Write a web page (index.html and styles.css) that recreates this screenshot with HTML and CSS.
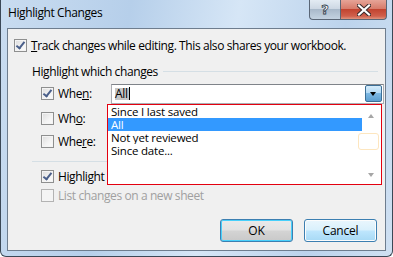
FILE: index.html
```html
<!DOCTYPE html>
<html lang="en">
<head>
  <meta charset="UTF-8" />
  <title>Highlight Changes</title>
  <link rel="stylesheet" href="styles.css">
</head>
<body>
  <div class="window">
    <div class="titlebar">
      <span class="title">Highlight Changes</span>
      <div class="caption">
        <span class="cap-btn help">?</span>
        <span class="cap-btn close">
          <svg width="14" height="12" viewBox="0 0 14 12">
            <path d="M2 1.5 L12 10.5 M12 1.5 L2 10.5" stroke="#3a2a2a" stroke-width="4.2" stroke-linecap="square"/>
            <path d="M2 1.5 L12 10.5 M12 1.5 L2 10.5" stroke="#ffffff" stroke-width="2.2" stroke-linecap="square"/>
          </svg>
        </span>
      </div>
    </div>

    <div class="client">
      <div class="row track">
        <span class="cb checked"></span>
        <span class="lbl"><u>T</u>rack changes while editing. This also shares your workbook.</span>
      </div>

      <div class="group-head">
        <span>Highlight which changes</span>
        <span class="rule"></span>
      </div>

      <div class="row opt when">
        <span class="cb checked"></span>
        <span class="lbl opt-lbl">Whe<u>n</u>:</span>
        <div class="combo">
          <span class="combo-text"><span class="sel">All</span><span class="caret"></span></span>
          <span class="combo-btn"></span>
        </div>
      </div>
      <div class="row opt who">
        <span class="cb"></span>
        <span class="lbl opt-lbl">Wh<u>o</u>:</span>
      </div>
      <div class="row opt">
        <span class="cb"></span>
        <span class="lbl opt-lbl">Whe<u>r</u>e:</span>
      </div>

      <div class="sep"></div>

      <div class="row opt screen">
        <span class="cb checked"></span>
        <span class="lbl">Highlight changes on <u>s</u>creen</span>
      </div>
      <div class="row opt list disabled">
        <span class="cb"></span>
        <span class="lbl">List changes on a new sheet</span>
      </div>

      <div class="buttons">
        <button class="btn default">OK</button>
        <button class="btn hover">Cancel</button>
      </div>

      <div class="dropdown">
        <div class="items">
          <div class="item">Since I last saved</div>
          <div class="item active">All</div>
          <div class="item">Not yet reviewed</div>
          <div class="item">Since date...</div>
        </div>
        <div class="scroll">
          <span class="arrow up"></span>
          <span class="thumb-glow"></span>
          <span class="arrow down"></span>
        </div>
      </div>
    </div>
  </div>
</body>
</html>
```

FILE: styles.css
```css
body {
  margin: 0;
  background: #ffffff;
  font-family: "Open Sans", "Noto Sans", sans-serif;
  font-size: 12px;
  color: #000;
}
.window {
  width: 393px;
  height: 257px;
  box-sizing: border-box;
  padding: 0 6px 5px 6px;
  border: 1px solid #3b4856;
  border-top: none;
  border-radius: 0 0 6px 6px;
  background: linear-gradient(100deg, #c9dcf0 0%, #b6cfea 30%, #d6e6f6 55%, #bcd3ec 80%, #cfe0f2 100%);
  position: relative;
}
.titlebar {
  height: 28px;
  display: flex;
  align-items: flex-start;
}
.title {
  margin-top: 5px;
  margin-left: 1px;
  line-height: 16px;
  letter-spacing: -0.4px;
}
.caption {
  margin-left: auto;
  margin-right: -1px;
  display: flex;
}
.cap-btn {
  height: 20px;
  box-sizing: border-box;
  display: flex;
  align-items: center;
  justify-content: center;
  border: 1px solid #5a6676;
  border-top: none;
}
.help {
  width: 31px;
  border-right: none;
  border-radius: 0 0 0 4px;
  background: linear-gradient(#e3ebf3 0%, #cdd8e4 45%, #a9b9ca 50%, #c3d2e1 100%);
  color: #fff;
  font-family: "DejaVu Sans", sans-serif;
  font-weight: bold;
  font-size: 13px;
  -webkit-text-stroke: 0.8px #2d3b4a;
}
.close {
  width: 47px;
  border-radius: 0 0 4px 0;
  background: linear-gradient(#e6a497 0%, #d77c6b 45%, #c24430 50%, #d0604c 85%, #e0957f 100%);
}
.client {
  position: relative;
  height: 223px;
  box-sizing: border-box;
  border: 1px solid #6e7d8e;
  background: #f0f0f0;
  padding-top: 8px;
}
.row {
  display: flex;
  align-items: center;
}
.track {
  height: 17px;
  padding-left: 6px;
}
.cb {
  width: 13px;
  height: 13px;
  box-sizing: border-box;
  border: 1px solid #8e8f8f;
  background: linear-gradient(135deg, #dcdcdc, #f4f4f4 60%, #fbfbfb);
  box-shadow: inset 0 0 0 1px #f4f4f4;
  flex: none;
  position: relative;
}
.cb.checked::after {
  content: "";
  position: absolute;
  left: 3px;
  top: 0px;
  width: 3px;
  height: 7px;
  border: solid #4a5f8a;
  border-width: 0 2px 2px 0;
  transform: rotate(38deg);
}
.lbl {
  margin-left: 4px;
  letter-spacing: -0.4px;
  line-height: 15px;
  white-space: nowrap;
}
.group-head {
  margin-top: 9px;
  height: 16px;
  padding-left: 24px;
  display: flex;
  align-items: center;
  letter-spacing: -0.4px;
}
.rule {
  flex: 1;
  height: 1px;
  background: #d5dfe5;
  margin-left: 5px;
  margin-right: 7px;
}
.opt {
  padding-left: 33px;
  height: 23px;
}
.when {
  margin-top: 3px;
}
.who {
  margin-top: 2px;
}
.opt-lbl {
  width: 45px;
}
.combo {
  width: 273px;
  height: 20px;
  box-sizing: border-box;
  margin-left: 8px;
  border: 1px solid #abadb3;
  border-top-color: #7f8389;
  background: #fff;
  display: flex;
  align-items: center;
}
.combo-text {
  flex: 1;
  display: flex;
  align-items: center;
  padding-left: 3px;
  letter-spacing: -0.3px;
}
.sel {
  background: #c7c7c7;
  line-height: 12px;
  padding: 0 1px 0 0;
}
.caret {
  width: 1px;
  height: 13px;
  background: #000;
}
.combo-btn {
  width: 17px;
  height: 17px;
  margin-right: 1px;
  box-sizing: border-box;
  border: 1px solid #3c6f96;
  border-radius: 2px;
  background: linear-gradient(#d6ecfa 0%, #b4daf5 45%, #7db8e3 50%, #5d9fd0 100%);
  position: relative;
}
.combo-btn::after {
  content: "";
  position: absolute;
  left: 4px;
  top: 6px;
  border-left: 3.5px solid transparent;
  border-right: 3.5px solid transparent;
  border-top: 4px solid #000;
}
.sep {
  margin: 8px 7px 0 24px;
  height: 1px;
  background: #d5dfe5;
}
.screen {
  margin-top: 6px;
  height: 17px;
}
.list {
  margin-top: 2px;
  height: 17px;
}
.disabled .lbl {
  color: #a0a0a0;
}
.disabled .cb {
  border-color: #b3b3b3;
  background: #f4f4f4;
}
.buttons {
  margin-top: 15px;
  padding-right: 8px;
  display: flex;
  justify-content: flex-end;
  gap: 11px;
}
.btn {
  width: 73px;
  height: 23px;
  box-sizing: border-box;
  border: 1px solid #707070;
  border-radius: 3px;
  font-family: inherit;
  font-size: 12px;
  letter-spacing: -0.2px;
  padding: 0;
  color: #000;
  background: linear-gradient(#f2f2f2 0%, #ebebeb 48%, #dddddd 52%, #cfcfcf 100%);
  box-shadow: inset 0 0 0 1px #fcfcfc;
}
.btn.default {
  border-color: #3c7fb1;
  box-shadow: inset 0 0 0 1px #48d0fb;
  background: linear-gradient(#eaeaea 0%, #e2e2e2 48%, #d4d4d4 52%, #c9c9c9 100%);
}
.btn.hover {
  border-color: #3c7fb1;
  background: linear-gradient(#eaf6fd 0%, #d9f0fc 48%, #bee6fd 52%, #a7d9f5 100%);
}
.dropdown {
  position: absolute;
  left: 99px;
  top: 75px;
  width: 275px;
  height: 81px;
  box-sizing: border-box;
  border: 1px solid #e3000f;
  background: #fff;
  display: flex;
}
.items {
  flex: 1;
}
.item {
  height: 13px;
  line-height: 13px;
  font-size: 11.5px;
  padding-left: 3px;
  letter-spacing: -0.2px;
  white-space: nowrap;
  overflow: hidden;
}
.item.active {
  background: #3399ff;
  color: #fff;
}
.scroll {
  width: 19px;
  position: relative;
}
.arrow {
  position: absolute;
  left: 6px;
  border-left: 3.5px solid transparent;
  border-right: 3.5px solid transparent;
}
.arrow.up {
  top: 9px;
  border-bottom: 4px solid #a6a6a6;
}
.arrow.down {
  bottom: 7px;
  border-top: 4px solid #a6a6a6;
}
.thumb-glow {
  position: absolute;
  left: -4px;
  top: 28px;
  width: 19px;
  height: 15px;
  border: 1px solid #fde6bf;
  border-radius: 3px;
}
```
